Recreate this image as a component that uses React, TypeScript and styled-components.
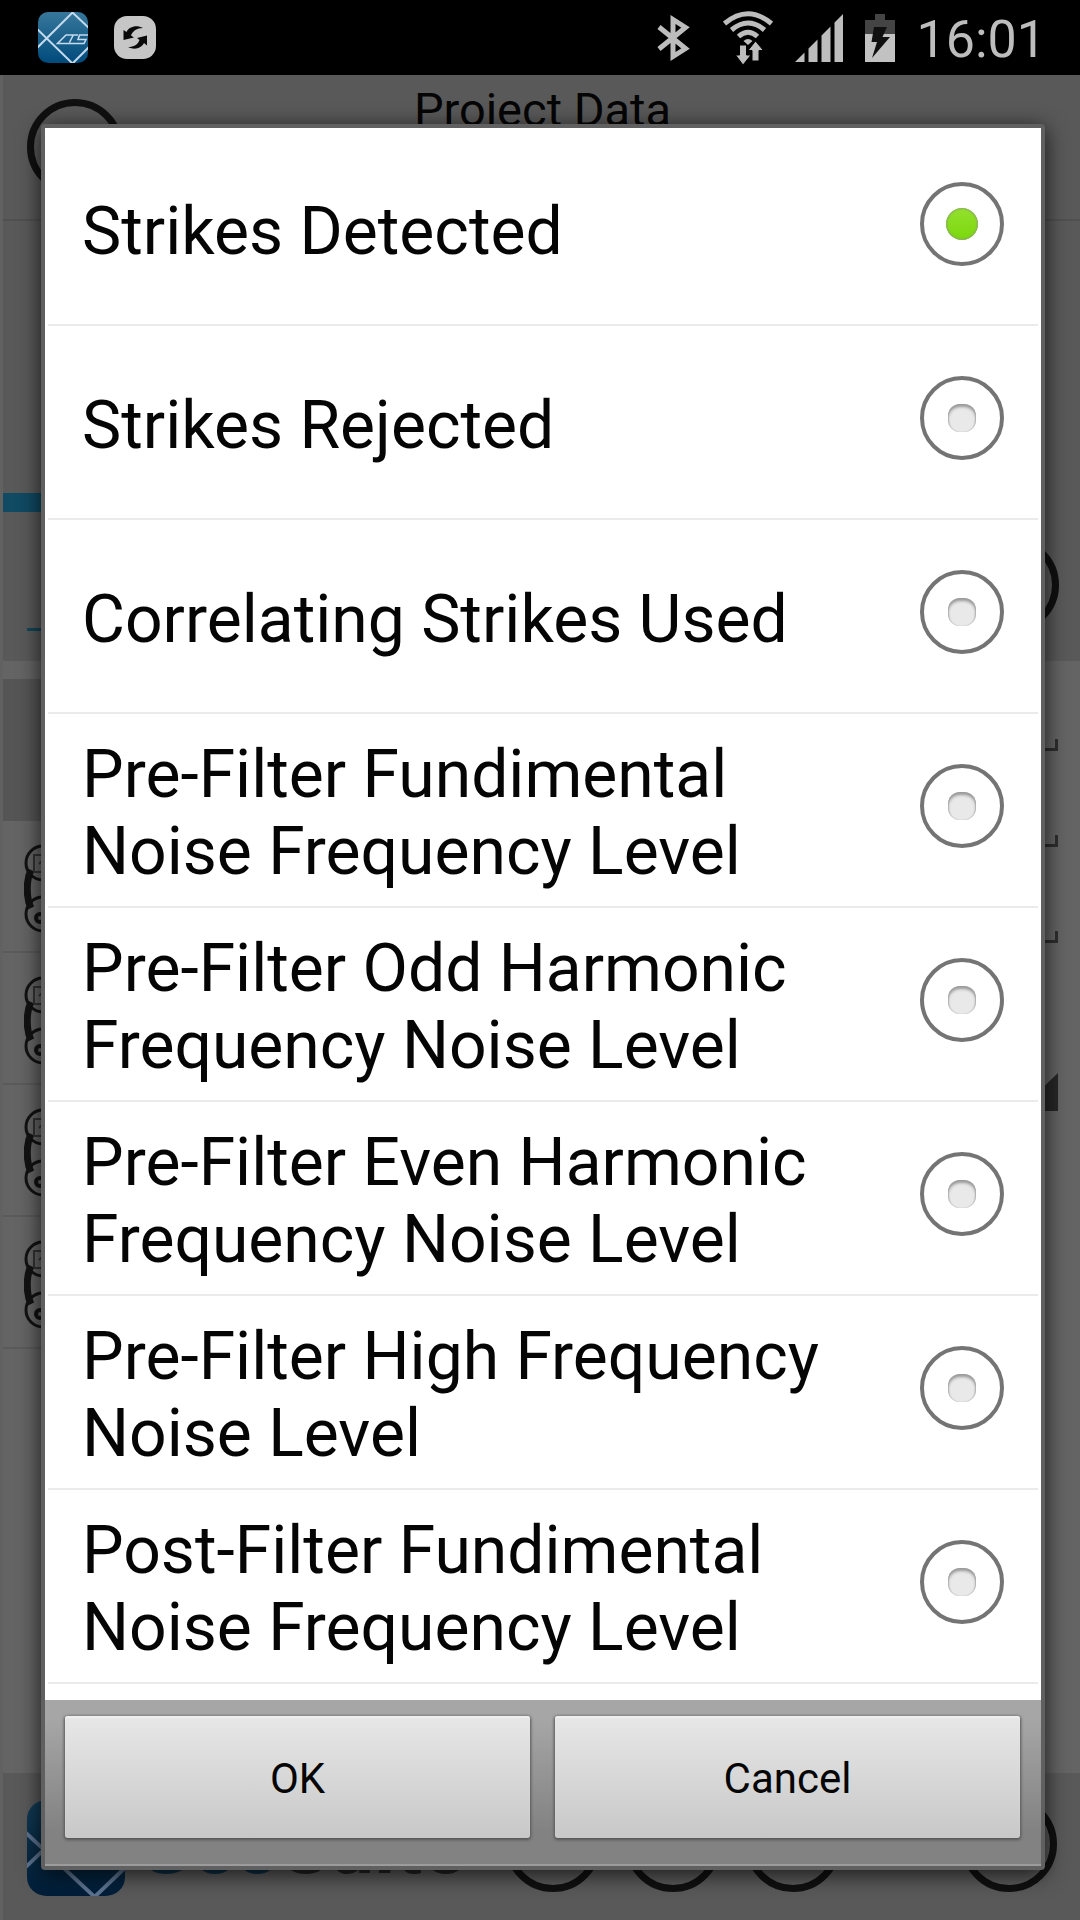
import React, { useState } from "react";
import styled, { createGlobalStyle } from "styled-components";

const GlobalStyle = createGlobalStyle`
  * { box-sizing: border-box; }
  body { margin: 0; background: #000; font-family: Roboto, "Noto Sans", sans-serif; }
  button, input { font: inherit; margin: 0; }
`;

const Phone = styled.div`
  display: flex;
  flex-direction: column;
  min-height: 100vh;
`;

const StatusBar = styled.header`
  display: flex;
  align-items: center;
  height: 75px;
  padding: 0 34px 0 38px;
  background: #000;
  color: #bdbdbd;
`;

const StatusGroup = styled.div<{ $gap: number; $end?: boolean }>`
  display: flex;
  align-items: center;
  gap: ${(p) => p.$gap}px;
  margin-left: ${(p) => (p.$end ? "auto" : "0")};
`;

const Clock = styled.time`
  font-size: 52px;
  line-height: 64px;
  padding-top: 4px;
`;

const Stage = styled.div`
  flex: 1;
  display: grid;
  grid-template: minmax(0, 1fr) / minmax(0, 1fr);
`;

const Page = styled.div`
  grid-area: 1 / 1;
  display: flex;
  flex-direction: column;
  background: #646464;
  border-left: 3px solid #616161;
`;

const PageHeader = styled.div`
  display: flex;
  align-items: flex-start;
  height: 146px;
  padding: 24px 24px 0;
  background: #595959;
  border-bottom: 2px solid #505050;
`;

const PageTitle = styled.h1`
  flex: 1;
  margin: -17px 94px 0 0;
  text-align: center;
  font-size: 47px;
  line-height: 56px;
  font-weight: 400;
  color: #050505;
`;

const RoundButton = styled.button`
  flex: none;
  width: 96px;
  height: 96px;
  padding: 0;
  border: 7px solid #101010;
  border-radius: 50%;
  background: transparent;
`;

const ChartPanel = styled.section`
  display: flex;
  flex-direction: column;
  height: 440px;
  padding-top: 272px;
  background: #595959;
`;

const TabMarker = styled.div`
  width: 50%;
  height: 19px;
  background: #104a63;
`;

const SelectorRow = styled.div`
  display: flex;
  align-items: center;
  justify-content: space-between;
  padding: 25px 21px 0 24px;
`;

const Underline = styled.div`
  width: 400px;
  height: 3px;
  margin-top: 88px;
  background: #124657;
`;

const Columns = styled.div`
  display: flex;
  justify-content: space-between;
  padding-top: 18px;
`;

const Items = styled.div`
  width: 50%;
`;

const ItemsHead = styled.div`
  height: 142px;
  background: #555;
`;

const Item = styled.div`
  height: 132px;
  padding: 23px 0 0 21px;
  border-bottom: 2px solid #5a5a5a;
`;

const Fields = styled.div`
  display: flex;
  flex-direction: column;
  align-items: flex-end;
  width: 40%;
  padding: 60px 22px 0 0;
`;

const FieldEdge = styled.div`
  width: 100%;
  height: 12px;
  margin-bottom: 84px;
  border: solid #2e2e2e;
  border-width: 0 3px 3px 0;

  &:nth-child(3) {
    margin-bottom: 130px;
  }
`;

const BottomBar = styled.footer`
  display: flex;
  align-items: flex-start;
  height: 147px;
  margin-top: auto;
  padding: 23px 23px 0 24px;
  background: #595959;
`;

const BrandLogo = styled.div`
  display: flex;
  padding-top: 4px;
`;

const Brand = styled.div`
  margin: 8px auto 0 12px;
  font-size: 80px;
  line-height: 84px;
  font-weight: 700;
  color: #222;
`;

const BrandAccent = styled.span`
  color: #0c2f45;
`;

const Actions = styled.div`
  display: flex;
  gap: 24px;
  margin-right: 120px;
`;

const Dialog = styled.form`
  grid-area: 1 / 1;
  z-index: 1;
  display: flex;
  flex-direction: column;
  margin: 49px 35px 50px 41px;
  border: 4px solid #606060;
  border-radius: 4px;
  background: #fff;
  box-shadow: 0 4px 22px rgba(0, 0, 0, 0.75);
`;

const Options = styled.div`
  flex: 1;
  padding: 4px 3px 0;
`;

const Option = styled.label`
  display: flex;
  align-items: center;
  gap: 24px;
  min-height: 194px;
  padding: 0 34px;
  border-bottom: 2px solid #ebebeb;
  color: #050505;
  font-size: 66px;
  line-height: 77px;
`;

const OptionText = styled.span`
  flex: 1;
  padding-top: 6px;
`;

const Radio = styled.input`
  appearance: none;
  flex: none;
  display: grid;
  place-items: center;
  width: 84px;
  height: 84px;
  margin-bottom: 8px;
  border: 4px solid #747474;
  border-radius: 50%;
  background: #fff;

  &::before {
    content: "";
    width: 28px;
    height: 28px;
    border-radius: 12px;
    background: #e9e9e9;
    box-shadow: inset 0 3px 3px #999, inset 1px 0 1px #c4c4c4, inset -1px 0 1px #c4c4c4;
  }

  &:checked::before {
    width: 32px;
    height: 32px;
    border-radius: 50%;
    background: linear-gradient(#93e12f, #7bd80c);
    box-shadow: inset 0 0 2px 1px #8aa865;
  }
`;

const Buttons = styled.div`
  display: grid;
  grid-template-columns: 1fr 1fr;
  gap: 25px;
  padding: 16px 21px 26px 20px;
  background: linear-gradient(#a6a6a6 12%, #828282 80%);
  border-bottom: 2px solid #9c9c9c;
`;

const DialogButton = styled.button`
  height: 122px;
  padding: 4px 0 0;
  border: 0;
  border-radius: 3px;
  background: linear-gradient(#e7e7e7, #c8c8c8);
  box-shadow: 0 1px 3px 1px #555, inset 0 2px 1px #efefef;
  color: #050505;
  font-size: 42px;
  line-height: 50px;
`;

function LogoMark({ width, height, dim }: { width: number; height: number; dim?: boolean }) {
  const id = dim ? "logo-dim" : "logo-bright";
  return (
    <svg width={width} height={height} viewBox="0 0 50 51" preserveAspectRatio="none" aria-hidden="true">
      <defs>
        <linearGradient id={id} x1="0" y1="0" x2="0" y2="1">
          <stop offset="0" stopColor={dim ? "#123c56" : "#37779b"} />
          <stop offset="1" stopColor={dim ? "#001d38" : "#004b7c"} />
        </linearGradient>
        <clipPath id={id + "-clip"}>
          <rect width="50" height="51" rx="10" />
        </clipPath>
      </defs>
      <g clipPath={`url(#${id}-clip)`} fill="none" stroke={dim ? "#5d7390" : "#c3d9ec"} strokeWidth="2">
        <rect width="50" height="51" fill={`url(#${id})`} stroke="none" />
        <path d="M-2 16 34.500 51.500 52 34M-2 37 34.500.5 52 17" />
        <path d="M51 23H41.500L40 27.500H48L46 31.500H19.500L28 23H40M35 23.500 31.500 30.500" strokeWidth="1.600" />
      </g>
    </svg>
  );
}

function SyncIcon() {
  return (
    <svg width="42" height="43" viewBox="0 0 42 43" aria-hidden="true">
      <rect width="42" height="43" rx="13" fill="#c6c6c6" />
      <path
        fill="#0a0a0a"
        d="M29 12C22 8.500 15 11 12.500 16L9.500 14V24L20 21.500L17 19.500C18.500 15 23 12 29 12ZM14 31C21 34.500 27.500 32 30 27L33 29.500V19.500L23 22L25.500 24C24 28.500 20 31 14 31Z"
      />
    </svg>
  );
}

function BluetoothIcon() {
  return (
    <svg width="34" height="50" viewBox="0 0 34 50" fill="none" stroke="currentColor" strokeWidth="5" aria-hidden="true">
      <path d="M2 14 28.500 35.500 16 43.500V6.500L28.500 14.500 2 36" />
    </svg>
  );
}

function WifiIcon() {
  return (
    <svg width="50" height="54" viewBox="0 0 50 54" aria-hidden="true">
      <g fill="none" stroke="currentColor" strokeWidth="5">
        <path d="M1.500 12.500Q25-7 48.500 12.500" />
        <path d="M8.500 19Q25 5 41.500 19" />
        <path d="M15.500 25.500Q25 17 34.500 25.500" />
      </g>
      <path fill="currentColor" d="M20.500 30Q25 26 29.500 30L25 34Z" />
      <path
        fill="currentColor"
        stroke="#000"
        strokeWidth="1"
        d="M16.500 34H23.500V44H28L20 54L12.500 44H16.500ZM29 50H36V39.500H40.500L32.500 30L25 39.500H29Z"
      />
    </svg>
  );
}

function SignalIcon() {
  return (
    <svg width="48" height="48" viewBox="0 0 48 48" fill="currentColor" aria-hidden="true">
      <path d="M0 48 9.500 38.500V48ZM13.500 34.500 22.500 25.500V48H13.500ZM26.500 21.500 35.500 12.500V48H26.500ZM39.500 8.500 48 0V48H39.500Z" />
    </svg>
  );
}

function BatteryIcon() {
  return (
    <svg width="30" height="48" viewBox="0 0 30 48" aria-hidden="true">
      <path fill="#444" d="M10 0H20V6H30V20H0V6H10Z" />
      <path fill="#c2c2c2" d="M0 20H30V48H0Z" />
      <path fill="#101010" d="M9 13H22L17.500 23H25L7 44L12 28H6.500Z" />
    </svg>
  );
}

function RecordIcon() {
  return (
    <svg width="60" height="92" viewBox="0 0 60 92" fill="none" stroke="#121212" aria-hidden="true">
      <path d="M7 26C2 36 2 54 7 64" strokeWidth="7" />
      <circle cx="19" cy="19" r="17" strokeWidth="3" />
      <circle cx="19" cy="70" r="17" strokeWidth="3" />
      <path d="M10 28V11H26M10 28H26M15 20 20 15" stroke="#333" strokeWidth="2" />
      <circle cx="16" cy="74" r="4" strokeWidth="4" />
    </svg>
  );
}

function Corner() {
  return (
    <svg width="40" height="38" viewBox="0 0 40 38" aria-hidden="true">
      <path d="M40 0V38H0Z" fill="#272727" />
    </svg>
  );
}

const OPTIONS = [
  "Strikes Detected",
  "Strikes Rejected",
  "Correlating Strikes Used",
  "Pre-Filter Fundimental Noise Frequency Level",
  "Pre-Filter Odd Harmonic Frequency Noise Level",
  "Pre-Filter Even Harmonic Frequency Noise Level",
  "Pre-Filter High Frequency Noise Level",
  "Post-Filter Fundimental Noise Frequency Level",
];

export default function App() {
  const [selected, setSelected] = useState(0);

  return (
    <>
      <GlobalStyle />
      <Phone>
        <StatusBar>
          <StatusGroup $gap={26}>
            <LogoMark width={50} height={51} />
            <SyncIcon />
          </StatusGroup>
          <StatusGroup $gap={22} $end>
            <StatusGroup $gap={32}>
              <BluetoothIcon />
              <WifiIcon />
            </StatusGroup>
            <SignalIcon />
            <BatteryIcon />
            <Clock>16:01</Clock>
          </StatusGroup>
        </StatusBar>
        <Stage>
          <Page aria-hidden="true">
            <PageHeader>
              <RoundButton type="button" tabIndex={-1} />
              <PageTitle>Project Data</PageTitle>
            </PageHeader>
            <ChartPanel>
              <TabMarker />
              <SelectorRow>
                <Underline />
                <RoundButton type="button" tabIndex={-1} />
              </SelectorRow>
            </ChartPanel>
            <Columns>
              <Items>
                <ItemsHead />
                {[0, 1, 2, 3].map((n) => (
                  <Item key={n}>
                    <RecordIcon />
                  </Item>
                ))}
              </Items>
              <Fields>
                <FieldEdge />
                <FieldEdge />
                <FieldEdge />
                <Corner />
              </Fields>
            </Columns>
            <BottomBar>
              <BrandLogo>
                <LogoMark width={98} height={96} dim />
              </BrandLogo>
              <Brand>
                <BrandAccent>Geo</BrandAccent>Suite
              </Brand>
              <Actions>
                <RoundButton type="button" tabIndex={-1} />
                <RoundButton type="button" tabIndex={-1} />
                <RoundButton type="button" tabIndex={-1} />
              </Actions>
              <RoundButton type="button" tabIndex={-1} />
            </BottomBar>
          </Page>
          <Dialog onSubmit={(e) => e.preventDefault()}>
            <Options role="radiogroup" aria-label="Project Data">
              {OPTIONS.map((label, i) => (
                <Option key={label}>
                  <OptionText>{label}</OptionText>
                  <Radio type="radio" name="series" checked={selected === i} onChange={() => setSelected(i)} />
                </Option>
              ))}
            </Options>
            <Buttons>
              <DialogButton type="submit">OK</DialogButton>
              <DialogButton type="button">Cancel</DialogButton>
            </Buttons>
          </Dialog>
        </Stage>
      </Phone>
    </>
  );
}
